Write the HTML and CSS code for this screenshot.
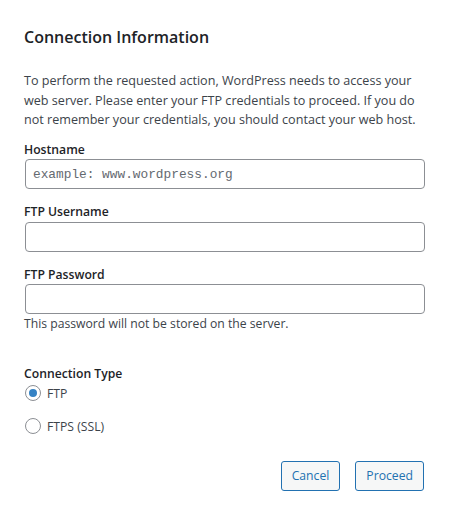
FILE: index.html
```html
<!DOCTYPE html>
<html lang="en">
<head>
<meta charset="utf-8">
<title>Connection Information</title>
<link rel="stylesheet" href="styles.css">
</head>
<body>
<form class="creds">
  <h2 class="creds-title">Connection Information</h2>
  <p class="creds-intro">To perform the requested action, WordPress needs to access your<br>web server. Please enter your FTP credentials to proceed. If you do<br>not remember your credentials, you should contact your web host.</p>

  <label class="field">
    <span class="field-label">Hostname</span>
    <input class="text-input code" type="text" placeholder="example: www.wordpress.org">
  </label>

  <label class="field">
    <span class="field-label">FTP Username</span>
    <input class="text-input" type="text">
  </label>

  <label class="field">
    <span class="field-label">FTP Password</span>
    <input class="text-input" type="password">
    <span class="field-note">This password will not be stored on the server.</span>
  </label>

  <fieldset class="conn-type">
    <legend class="field-label">Connection Type</legend>
    <label class="radio-row"><input class="radio" type="radio" name="ct" checked> FTP</label>
    <label class="radio-row"><input class="radio" type="radio" name="ct"> FTPS (SSL)</label>
  </fieldset>

  <div class="actions">
    <button type="button" class="btn">Cancel</button>
    <button type="button" class="btn">Proceed</button>
  </div>
</form>
</body>
</html>
```

FILE: styles.css
```css
* { box-sizing: border-box; }

html, body {
  margin: 0;
  background: #fff;
}

body {
  font-family: "Open Sans", "Noto Sans", sans-serif;
  font-size: 12.2px;
  line-height: 19.5px;
  color: #3c434a;
}

.creds {
  width: 449px;
  padding: 25px 23px 0 24px;
}

.creds-title {
  margin: 0;
  font-size: 16px;
  line-height: 24px;
  font-weight: 600;
  color: #1d2327;
}

.creds-intro {
  margin: 22px 0 10px;
  font-size: 12.6px;
  color: #3c434a;
  white-space: nowrap;
}

.field {
  display: flex;
  flex-direction: column;
  margin-bottom: 13px;
}

.field-label {
  display: block;
  font-weight: 600;
  color: #1d2327;
  padding: 0;
}

.text-input {
  width: 400px;
  height: 30px;
  margin: 0 1px;
  padding: 0 8px;
  border: 1px solid #8c8f94;
  border-radius: 4px;
  background: #fff;
  font-family: inherit;
  font-size: 13px;
  color: #2c3338;
  outline: none;
}

.text-input.code {
  font-family: "Liberation Mono", "DejaVu Sans Mono", monospace;
  font-size: 12.8px;
  padding-left: 7px;
}

.text-input::placeholder {
  color: #646970;
  opacity: 1;
}

.field-note {
  display: block;
  color: #3c434a;
}

.conn-type {
  margin: 30.5px 0 0;
  padding: 0;
  border: 0;
}

.conn-type legend {
  padding: 0;
}

.radio-row {
  display: flex;
  align-items: center;
  gap: 6px;
  height: 19.5px;
  margin-bottom: 13.5px;
  color: #3c434a;
}

.radio {
  appearance: none;
  -webkit-appearance: none;
  width: 16px;
  height: 16px;
  margin: 0 0 0 1px;
  border: 1px solid #8c8f94;
  border-radius: 50%;
  background: #fff;
  display: grid;
  place-items: center;
  flex: none;
}

.radio:checked::before {
  content: "";
  width: 8px;
  height: 8px;
  border-radius: 50%;
  background: #3582c4;
}

.actions {
  display: flex;
  justify-content: flex-end;
  gap: 15px;
  margin-top: 11px;
  padding-right: 2px;
}

.btn {
  height: 30px;
  padding: 0 10px;
  border: 1px solid #2271b1;
  border-radius: 3px;
  background: #f6f7f7;
  color: #2271b1;
  font-family: inherit;
  font-size: 12.2px;
  line-height: 28px;
}
```
